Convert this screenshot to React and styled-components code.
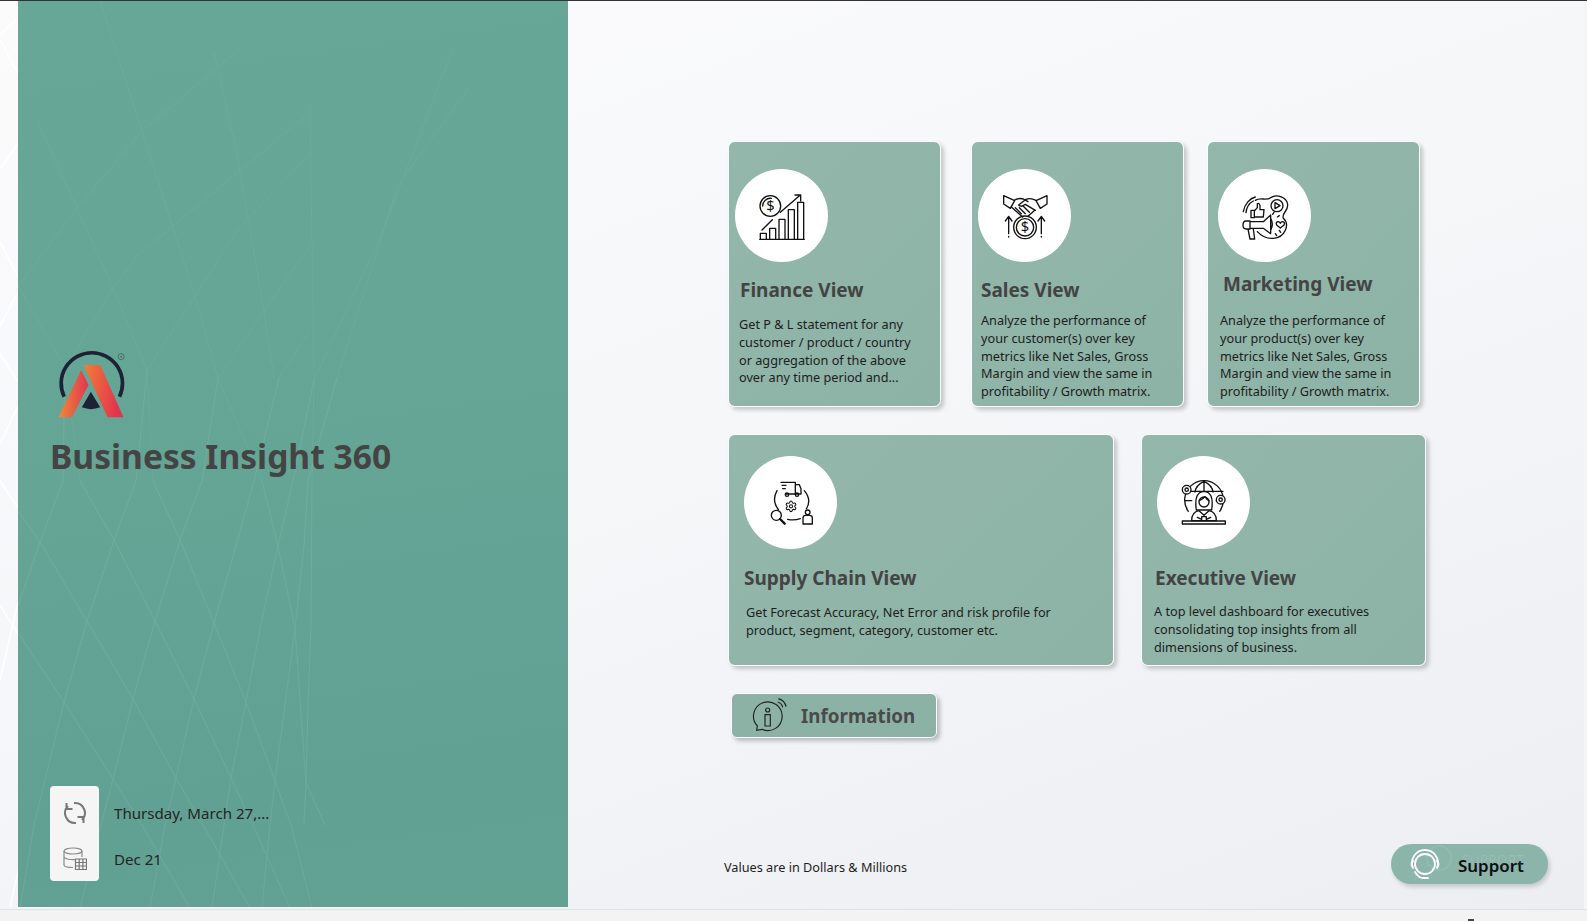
import React from "react";
import styled, { createGlobalStyle } from "styled-components";
import { Settings } from "lucide-react";

const GlobalStyle = createGlobalStyle`
    html, body {
        margin: 0;
        padding: 0;
        background: #f3f3f3;
        font-family: "Noto Sans", "Open Sans", "Liberation Sans", sans-serif;
    }
`;

const Shell = styled.div`
    width: 1587px;
    height: 921px;
    display: flex;
    flex-direction: column;
    overflow: hidden;
`;

const TopLine = styled.div`
    height: 1px;
    flex: none;
    background: #333;
`;

const Canvas = styled.div`
    height: 908px;
    flex: none;
    display: flex;
    background: linear-gradient(160deg, #fbfbfc 0%, #f6f7f9 45%, #edeef2 100%);
`;

const BottomBar = styled.div`
    flex: 1;
    display: flex;
    align-items: flex-end;
    padding-left: 1468px;
    background: #f3f3f3;
    border-top: 1px solid #e1e1e1;
`;

const BarMark = styled.div`
    width: 6px;
    height: 2px;
    background: #444;
`;

const Strip = styled.div`
    width: 18px;
    flex: none;
`;

const Panel = styled.aside`
    position: relative;
    width: 550px;
    height: 906px;
    flex: none;
    display: flex;
    flex-direction: column;
    padding: 349px 0 26px 32px;
    box-sizing: border-box;
    background: linear-gradient(172deg, #67a797 0%, #65a596 50%, #61a194 85%, #62a293 100%);
`;

const Pattern = styled.svg`
    display: block;
    fill: none;
    stroke: #fff;
    stroke-width: ${(p) => p.$stroke};
    opacity: ${(p) => p.$opacity};
`;

const PanelPattern = styled(Pattern)`
    position: absolute;
    inset: 0;
`;

const Logo = styled.svg`
    position: relative;
    display: block;
    margin-left: 5px;
`;

const Brand = styled.h1`
    position: relative;
    margin: 13px 0 0;
    font-size: 33.6px;
    line-height: 46px;
    font-weight: 700;
    color: #444;
    white-space: nowrap;
`;

const Status = styled.div`
    position: relative;
    display: flex;
    align-items: center;
    margin-top: auto;
`;

const StatusIcons = styled.div`
    width: 49px;
    height: 95px;
    padding-top: 4px;
    box-sizing: border-box;
    display: flex;
    flex-direction: column;
    align-items: center;
    justify-content: center;
    gap: 21px;
    background: #f5f5f5;
    border-radius: 4px;
`;

const StatusText = styled.div`
    display: flex;
    flex-direction: column;
    gap: 26px;
    margin: 4px 0 0 15px;
    font-size: 15.1px;
    line-height: 20px;
    color: #252423;
`;

const Content = styled.main`
    flex: 1;
    display: flex;
    flex-direction: column;
    padding: 140px 36px 0 156px;
`;

const CardRow = styled.div`
    display: flex;
    padding-left: 4px;
    margin-bottom: ${(p) => p.$after}px;
`;

const Card = styled.section`
    width: ${(p) => p.$width}px;
    height: ${(p) => p.$height}px;
    margin-left: ${(p) => p.$offset || 0}px;
    padding-top: ${(p) => p.$top}px;
    flex: none;
    box-sizing: border-box;
    display: flex;
    flex-direction: column;
    background: linear-gradient(135deg, #93b7ab, #8db2a6);
    border: 1.5px solid #fcfcfc;
    border-radius: 7px;
    box-shadow: 3px 3px 4px rgba(0, 0, 0, 0.2);
`;

const IconCircle = styled.div`
    width: 93px;
    height: 93px;
    flex: none;
    margin-left: ${(p) => p.$left}px;
    display: flex;
    align-items: center;
    justify-content: center;
    background: #fff;
    border-radius: 50%;
`;

const LineIcon = styled.svg`
    display: block;
    fill: none;
    stroke: #111;
    stroke-width: 4;
    stroke-linecap: round;
    stroke-linejoin: round;
    .solid {
        fill: #fff;
    }
    text {
        fill: #111;
        stroke: none;
        font-family: "Noto Sans", sans-serif;
        font-size: 44px;
        text-anchor: middle;
    }
`;

const CardTitle = styled.h2`
    margin: ${(p) => p.$gap}px 0 0 ${(p) => p.$left}px;
    font-size: 19px;
    line-height: 28px;
    font-weight: 700;
    color: #444;
    white-space: nowrap;
`;

const CardText = styled.p`
    margin: ${(p) => p.$gap}px 0 0 ${(p) => p.$left}px;
    font-size: 12.7px;
    line-height: 17.8px;
    color: #1d1d1d;
    white-space: nowrap;
`;

const InfoButton = styled.button`
    width: 206px;
    height: 45px;
    margin-left: 7px;
    padding: 0 0 0 18px;
    display: flex;
    align-items: center;
    gap: 11px;
    box-sizing: border-box;
    font: 700 18.8px "Noto Sans", sans-serif;
    color: #4a4a4a;
    background: #8cb2a6;
    border: 1.5px solid #fcfcfc;
    border-radius: 6px;
    box-shadow: 3px 3px 4px rgba(0, 0, 0, 0.24);
`;

const Footer = styled.footer`
    display: flex;
    align-items: center;
    justify-content: space-between;
    margin-top: 106px;
`;

const Note = styled.span`
    margin-top: 6px;
    font-size: 12.7px;
    color: #1d1d1d;
`;

const SupportButton = styled.button`
    position: relative;
    width: 157px;
    height: 40px;
    padding: 2px 0 0 18px;
    display: flex;
    align-items: center;
    gap: 17px;
    box-sizing: border-box;
    font: 600 16.9px "Noto Sans", sans-serif;
    color: #0c0c14;
    background: #8ab5a8;
    border: 0;
    border-radius: 20px;
    box-shadow: 2px 3px 4px rgba(0, 0, 0, 0.16);
`;

const SupportGhost = styled.span`
    position: absolute;
    left: 71px;
    top: 7px;
    font-size: 13.5px;
    font-weight: 400;
    letter-spacing: 0.3px;
    color: rgba(255, 255, 255, 0.12);
`;

const GhostRing = styled.span`
    position: absolute;
    left: 35px;
    top: 1px;
    width: 22px;
    height: 22px;
    border: 2px solid rgba(255, 255, 255, 0.08);
    border-radius: 50%;
`;

const RightGutter = styled.div`
    width: 3px;
    flex: none;
    background: #f5f5f5;
`;

// panel lattice in panel px, traced from the page and shifted 18px left by the viewBox
const upperLines = [
    "100,0 142,130 195,295 218,377 262,480",
    "38,122 77,207 113,287 147,369 153,480",
    "214,50 237,153 264,310 274,377",
    "17,283 65,367 80,480",
    "65,367 113,287 138,254 306,115",
    "17,287 77,207 142,130 237,50",
    "147,369 195,295 237,230 310,153",
    "218,377 264,310 310,245",
    "279,377 310,329",
    "314,379 383,230 452,50",
    "337,377 398,184 471,84",
    "310,107 314,379 312,480",
];

const lowerLines = [
    "19,511 40,541 87,620 133,698 176,777 203,824 250,907",
    "19,633 64,701 113,778 142,824 190,907",
    "80,480 114,539 155,620 194,698 231,777 253,824 290,907",
    "153,480 180,539 214,622 246,701 275,780 291,824 312,907",
    "262,480 278,545 295,627 306,782 325,824",
    "15,614 40,541 63,480 65,367",
    "20,907 34,824 64,701 87,620 114,539 136,480 147,369",
    "80,907 101,824 113,778 133,698 155,620 180,539 202,480 218,377",
    "150,907 165,824 176,777 194,698 214,622 236,545 254,480 279,377",
    "212,907 224,824 231,777 246,701 261,623 278,545 293,480 314,379",
    "262,907 270,824 275,780 285,704 295,627 304,545 308,480 337,377",
    "304,824 306,782 308,704 311,625 312,480",
];

const stripLines = [
    "0,38 18,73",
    "0,34 18,17",
    "0,168 18,142",
    "0,241 18,276",
    "0,325 18,291",
    "0,353 18,381",
    "0,443 18,405",
    "0,480 18,507",
    "0,604 18,633",
    "0,679 15,614 18,600",
    "18,870 10,907",
];

const Lines = ({ list }) => (
    <>
        {list.map((points) => (
            <polyline key={points} points={points} />
        ))}
    </>
);

const FinanceIcon = () => (
    <LineIcon width="50" height="50" viewBox="0 0 150 150">
        <circle cx="40" cy="45" r="31" />
        <path d="M17 45a23 23 0 0 1 26-23" />
        <text x="40" y="60">$</text>
        <path d="M15 117L46 86M70 64L130 12M114 12H131V30" />
        <path d="M8 145H142M10 145V127H28V145M38 145V112H56V145M66 145V85H84V145M94 145V56H112V145M122 145V34H140V145" />
    </LineIcon>
);

const SalesIcon = () => (
    <LineIcon width="50" height="50" viewBox="0 0 150 150">
        <path d="M11 14L44 29L31 52L11 39ZM141 14L108 29L121 52L141 39Z" />
        <path d="M44 27Q58 20 70 24L84 32M108 28Q92 20 78 25L56 42Q64 50 76 40L106 58" />
        <path d="M34 48L68 78M46 50L64 68M58 50L76 68M70 46L88 64M104 58L84 76" />
        <circle cx="75" cy="109" r="34" />
        <circle cx="75" cy="109" r="26" />
        <text x="75" y="124">$</text>
        <path d="M26 128V76M16 90L26 76L36 90M124 128V76M114 90L124 76L134 90M26 136V138M124 136V138" />
    </LineIcon>
);

const MarketingIcon = () => (
    <LineIcon width="50" height="50" viewBox="0 0 150 150">
        <circle cx="111" cy="44" r="18" />
        <path d="M105 35L120 44L105 53Z" />
        <path d="M46 28C60 18 80 30 92 20C110 8 142 18 143 42C144 62 124 66 130 82C150 100 136 140 100 142C80 144 64 135 52 122" />
        <path d="M10 62C14 38 30 22 46 18M18 65C20 48 30 35 40 30" />
        <path d="M33 58H43V80H33ZM43 60L52 50V38Q58 35 60 44V56H72L70 78H43" />
        <path d="M30 92H70L92 72V128L70 112H30ZM92 82Q102 100 92 118M30 90H18Q9 90 9 102Q9 114 18 114H30ZM24 114L30 144H44L40 114" />
        <path d="M121 111L110 102Q106 94 114 92Q119 92 121 97Q123 92 128 92Q136 94 132 102Z" />
        <path d="M98 70L102 64M112 78L118 74M106 128L110 134M118 118L122 124" />
    </LineIcon>
);

const SupplyIcon = () => (
    <LineIcon width="50" height="50" viewBox="0 0 150 150">
        <path d="M45 13H88V48H58M88 20H100L105 32V48H88M68 48H88M48 22H60M50 32H58" />
        <circle cx="63" cy="50" r="5" />
        <circle cx="93" cy="50" r="5" />
        <Settings x={56} y={66} width={38} height={38} strokeWidth={2} stroke="#111" />
        <path d="M33 38Q16 68 38 96M115 38Q138 66 121 93M65 124Q84 128 103 122" />
        <circle cx="31" cy="112" r="15" />
        <path d="M42 123L56 137" strokeWidth="7" />
        <circle cx="125" cy="103" r="7" />
        <path d="M111 138V120Q111 112 119 112H131Q139 112 139 120V138Z" />
    </LineIcon>
);

const ExecutiveIcon = () => (
    <LineIcon width="50" height="50" viewBox="0 0 150 150">
        <path d="M28 100A58 58 0 1 1 122 100M18 40H132M18 68H38M112 68H132" />
        <path d="M48 42Q50 22 75 10Q100 22 102 42M75 10V40" />
        <path className="solid" d="M52 96Q44 42 75 40Q106 42 98 96Z" />
        <circle cx="75" cy="72" r="15" />
        <path d="M61 68Q72 64 78 56Q84 66 90 68" />
        <path className="solid" d="M38 128Q38 102 60 98L75 112L90 98Q112 102 112 128Z" />
        <path d="M68 128V116H82V128M55 118L68 124M95 118L82 124" />
        <rect x="10" y="129" width="129" height="9" />
        <circle className="solid" cx="23" cy="35" r="13" />
        <circle cx="23" cy="35" r="5" />
        <circle className="solid" cx="125" cy="65" r="13" />
        <circle cx="125" cy="65" r="5" />
    </LineIcon>
);

const cards = [
    [
        {
            id: "finance",
            width: 213,
            top: 27,
            circle: 6,
            icon: <FinanceIcon />,
            title: "Finance View",
            titleGap: 14,
            titleLeft: 11,
            textGap: 12,
            textLeft: 10,
            lines: ["Get P & L statement for any", "customer / product / country", "or aggregation of the above", "over any time period and..."],
        },
        {
            id: "sales",
            width: 213,
            offset: 30,
            top: 27,
            circle: 6,
            icon: <SalesIcon />,
            title: "Sales View",
            titleGap: 14,
            titleLeft: 9,
            textGap: 8,
            textLeft: 9,
            lines: ["Analyze the performance of", "your customer(s) over key", "metrics like Net Sales, Gross", "Margin and view the same in", "profitability / Growth matrix."],
        },
        {
            id: "marketing",
            width: 213,
            offset: 23,
            top: 27,
            circle: 10,
            icon: <MarketingIcon />,
            title: "Marketing View",
            titleGap: 8,
            titleLeft: 15,
            textGap: 14,
            textLeft: 12,
            lines: ["Analyze the performance of", "your product(s) over key", "metrics like Net Sales, Gross", "Margin and view the same in", "profitability / Growth matrix."],
        },
    ],
    [
        {
            id: "supply",
            width: 386,
            top: 21,
            circle: 15,
            icon: <SupplyIcon />,
            title: "Supply Chain View",
            titleGap: 15,
            titleLeft: 15,
            textGap: 12,
            textLeft: 17,
            lines: ["Get Forecast Accuracy, Net Error and risk profile for", "product, segment, category, customer etc."],
        },
        {
            id: "executive",
            width: 285,
            offset: 27,
            top: 21,
            circle: 15,
            icon: <ExecutiveIcon />,
            title: "Executive View",
            titleGap: 15,
            titleLeft: 13,
            textGap: 11,
            textLeft: 12,
            lines: ["A top level dashboard for executives", "consolidating top insights from all", "dimensions of business."],
        },
    ],
];

const rows = [
    { height: 266, after: 27 },
    { height: 232, after: 27 },
];

const App = () => (
    <Shell>
        <GlobalStyle />
        <TopLine />
        <Canvas>
            <Strip>
                <Pattern width="18" height="906" viewBox="0 0 18 906" $stroke={1.4} $opacity={1}>
                    <Lines list={stripLines} />
                </Pattern>
            </Strip>
            <Panel>
                <PanelPattern width="550" height="906" viewBox="18 0 550 906" $stroke={1} $opacity={0.045}>
                    <Lines list={upperLines} />
                </PanelPattern>
                <PanelPattern width="550" height="906" viewBox="18 0 550 906" $stroke={1.1} $opacity={0.07}>
                    <Lines list={lowerLines} />
                </PanelPattern>
                <Logo width="72" height="70" viewBox="165 60 215 210">
                    <defs>
                        <linearGradient id="logoLeft" x1="0" y1="0" x2="1" y2="0">
                            <stop offset="0" stopColor="#f08a35" />
                            <stop offset="1" stopColor="#e03552" />
                        </linearGradient>
                        <linearGradient id="logoRight" x1="0" y1="0" x2="1" y2="0.25">
                            <stop offset="0" stopColor="#ef8035" />
                            <stop offset="1" stopColor="#e2334f" />
                        </linearGradient>
                    </defs>
                    <path d="M192 200A92 92 0 1 1 358 200" fill="none" stroke="#1e2235" strokeWidth="11" />
                    <polygon points="175,262 215,262 265,165 243,120" fill="url(#logoLeft)" />
                    <polygon points="250,105 300,105 370,262 322,262" fill="url(#logoRight)" />
                    <path d="M272 185L300 232Q272 243 245 232Z" fill="#1e2235" />
                    <circle cx="363" cy="80" r="9" fill="none" stroke="#4f6f69" strokeWidth="3" />
                    <circle cx="363" cy="80" r="3" fill="#4f6f69" />
                </Logo>
                <Brand>Business Insight 360</Brand>
                <Status>
                    <StatusIcons>
                        <svg width="24" height="24" viewBox="0 0 24 24" fill="none" stroke="#777" strokeWidth="2">
                            <path d="M3.500 2V8H9.500M5 5A10 10 0 0 0 13 22M20.500 22V16H14.500M19 19A10 10 0 0 0 11 2" />
                        </svg>
                        <svg width="24" height="24" viewBox="0 0 24 24" fill="none" stroke="#8a8a8a" strokeWidth="1.2">
                            <ellipse cx="10" cy="5" rx="9" ry="3" />
                            <path d="M1 5V19Q1 21.5 10 21.5M19 5V11M1 11Q3 14 13 13.6" />
                            <path d="M12.5 13H23.5V23.5H12.5ZM16.2 13V23.500M19.900 13V23.500M12.500 16.500H23.500M12.500 20H23.500" stroke="#777" />
                        </svg>
                    </StatusIcons>
                    <StatusText>
                        <span>Thursday, March 27,...</span>
                        <span>Dec 21</span>
                    </StatusText>
                </Status>
            </Panel>
            <Content>
                {cards.map((row, i) => (
                    <CardRow key={row[0].id} $after={rows[i].after}>
                        {row.map((card) => (
                            <Card key={card.id} $width={card.width} $height={rows[i].height} $offset={card.offset} $top={card.top}>
                                <IconCircle $left={card.circle}>{card.icon}</IconCircle>
                                <CardTitle $gap={card.titleGap} $left={card.titleLeft}>
                                    {card.title}
                                </CardTitle>
                                <CardText $gap={card.textGap} $left={card.textLeft}>
                                    {card.lines.map((line) => (
                                        <React.Fragment key={line}>
                                            {line}
                                            <br />
                                        </React.Fragment>
                                    ))}
                                </CardText>
                            </Card>
                        ))}
                    </CardRow>
                ))}
                <InfoButton>
                    <svg width="40" height="40" viewBox="0 0 120 120" fill="none" stroke="#222" strokeWidth="3.500">
                        <path d="M22 90A43 43 0 1 1 36 100L20 103Z" />
                        <circle cx="53" cy="42" r="6" />
                        <path d="M45 56H61V90H45Z" />
                        <path d="M85 8Q105 14 108 32M83 18Q96 22 98 34" />
                    </svg>
                    Information
                </InfoButton>
                <Footer>
                    <Note>Values are in Dollars & Millions</Note>
                    <SupportButton>
                        <GhostRing />
                        <SupportGhost>SUPPORT</SupportGhost>
                        <svg width="32" height="32" viewBox="0 0 32 32" fill="none" stroke="#fff" strokeWidth="1.800" strokeLinecap="round">
                            <circle cx="16" cy="15" r="10" />
                            <path d="M4 19A13 13 0 1 1 28 19M4 12Q1 15 4 19M28 12Q31 15 28 19M6 23Q9 28 13 29H19" />
                        </svg>
                        <span>Support</span>
                    </SupportButton>
                </Footer>
            </Content>
            <RightGutter />
        </Canvas>
        <BottomBar>
            <BarMark />
        </BottomBar>
    </Shell>
);

export default App;
